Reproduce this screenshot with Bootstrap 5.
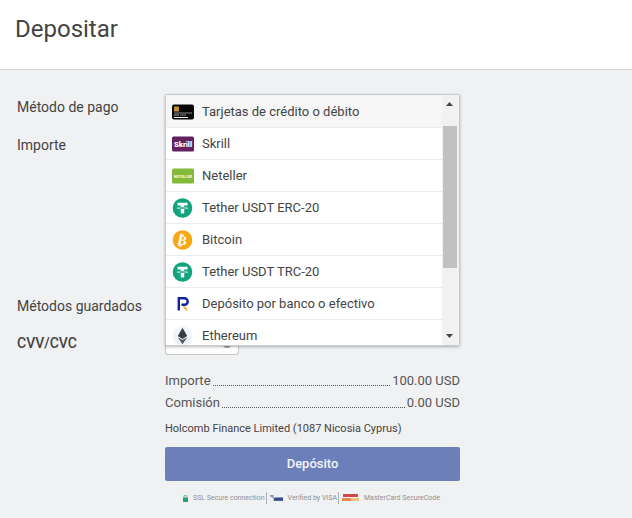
<!DOCTYPE html>
<html lang="es">
<head>
<meta charset="utf-8">
<title>Depositar</title>
<link href="https://cdn.jsdelivr.net/npm/bootstrap@5.3.0/dist/css/bootstrap.min.css" rel="stylesheet">
<style>
html,body{height:100%}
body{background:#f0f1f3;font-family:Roboto,"Liberation Sans",sans-serif;color:#444;font-size:14px;overflow:hidden}
.dep-head{height:70px;background:#fff;border-bottom:1px solid #d2d3d5;padding:15px 16px 0 15px}
.dep-title{font-size:24px;font-weight:400;line-height:28px;color:#444;margin:0}
.dep-form{width:460px}
.dep-labels{width:165px;flex:none}
.dep-lab{line-height:18px;font-size:14px;color:#444;position:absolute;left:17px;margin:0}
.dep-lab-1{top:98px}
.dep-lab-2{top:136px}
.dep-lab-3{top:297px}
.dep-lab-4{top:334px;font-size:14px;font-weight:500}
.dep-main{width:295px;flex:none}
.dep-stage{height:286px;padding-top:275px}
.dep-cvv{width:74px;height:10px;border:1px solid #c6c7c9;border-top:0;border-radius:0 0 4px 4px;background:#fff;padding-right:6px}
.dep-drop{position:absolute;left:165px;top:94px;width:295px;height:252px;background:#fff;border:1px solid #c9cacc;border-radius:2px;box-shadow:0 1px 3px rgba(0,0,0,.28);overflow:hidden;z-index:5}
.dep-list{flex:1 1 auto;min-width:0;overflow:hidden;padding-top:1px}
.dep-item{height:32px;flex:none;border-bottom:1px solid #ebebeb;padding-left:6px;gap:8px;font-size:13px;color:#444;background:#fff}
.dep-item.dep-sel{background:#f6f6f6;box-shadow:0 -1px 0 #f6f6f6}
.dep-ico{width:22px;height:20px;flex:none;display:block}
.dep-bar{width:17px;flex:none;background:#f1f1f1;position:relative}
.dep-thumb{position:absolute;left:1px;width:14px;top:31px;height:142px;background:#c1c1c1}
.dep-arrow{position:absolute;left:4px;width:7px;height:4px}
.dep-arrow-up{top:7px}
.dep-arrow-down{bottom:7px}
.dep-sum{line-height:18px;font-size:13px;color:#555;margin-top:16px}
.dep-sum+.dep-sum{margin-top:4px}
.dep-dots{flex:1 1 auto;border-bottom:1px dotted #555;margin:0 2px 4px;height:1px;align-self:flex-end}
.dep-comp{font-size:11px;line-height:16px;color:#444;margin-top:9px}
.dep-btn{display:block;width:295px;height:34px;margin-top:10px;background:#6c7fbb;border:0;border-radius:2px;color:#f3f4f8;font-size:13px;font-weight:500;padding:0}
.dep-secure{margin-top:11px;font-size:7px;line-height:10px;color:#8e9095;height:12px;padding-left:18px}
.dep-sep{width:1px;height:12px;background:#b0b1b3;margin:0 3px 0 1px}
.dep-sico{margin-right:5px;flex:none}
</style>
</head>
<body>
<header class="dep-head"><h1 class="dep-title">Depositar</h1></header>
<main class="dep-form d-flex">
  <div class="dep-labels">
    <p class="dep-lab dep-lab-1">Método de pago</p>
    <p class="dep-lab dep-lab-2">Importe</p>
    <p class="dep-lab dep-lab-3">Métodos guardados</p>
    <p class="dep-lab dep-lab-4">CVV/CVC</p>
  </div>
  <div class="dep-main">
    <div class="dep-stage"><div class="dep-cvv d-flex justify-content-end"><svg width="10" height="3" viewBox="0 0 10 3"><path d="M0 0h10L7 3H3z" fill="#aaa"/></svg></div></div>
    <div class="dep-sum d-flex justify-content-between"><span>Importe</span><span class="dep-dots"></span><span>100.00 USD</span></div>
    <div class="dep-sum d-flex justify-content-between"><span>Comisión</span><span class="dep-dots"></span><span>0.00 USD</span></div>
    <div class="dep-comp">Holcomb Finance Limited (1087 Nicosia Cyprus)</div>
    <button class="dep-btn" type="button">Depósito</button>
    <div class="dep-secure d-flex align-items-center">
      <svg class="dep-sico" width="5" height="7" viewBox="0 0 5 7"><rect y="2.500" width="5" height="4.500" fill="#2e9e6b"/><path d="M1 2.500V1.500a1.500 1.500 0 0 1 3 0V2.500" fill="none" stroke="#2e9e6b" stroke-width=".8"/></svg>
      <span>SSL Secure connection</span><span class="dep-sep"></span>
      <svg class="dep-sico" width="13" height="7" viewBox="0 0 14 7"><rect y="0" width="4" height="1.500" fill="#6a7db0"/><rect x="2" y="1.500" width="2" height="1.500" fill="#8b9bc4"/><rect x="5" y="2" width="9" height="1" fill="#7d8fbc"/><rect x="4" y="3" width="10" height="3" fill="#33497f"/></svg>
      <span>Verified by VISA</span><span class="dep-sep"></span>
      <svg class="dep-sico" width="17" height="8" viewBox="0 0 17 8"><rect x="1" y="0" width="15" height="3" fill="#d0474a"/><rect x="0" y="4" width="9" height="3" fill="#e38b4e"/><rect x="9" y="4" width="8" height="3" fill="#eec27a"/></svg>
      <span>MasterCard SecureCode</span>
    </div>
  </div>
</main>
<div class="dep-drop d-flex">
  <div class="dep-list d-flex flex-column">
    <div class="dep-item dep-sel d-flex align-items-center"><svg class="dep-ico" viewBox="0 0 22 20"><rect y="2.500" width="22" height="15" rx="2" fill="#060606"/><rect x="2" y="4.500" width="5" height="5" fill="#c08f2e"/><rect x="2" y="10.500" width="18" height="1" fill="#8a8a8a"/><rect x="2" y="12.500" width="5" height="1" fill="#c9a9a0"/><rect x="8" y="12.500" width="6" height="1" fill="#8a8a8a"/><rect x="2" y="15" width="14" height="1" fill="#f4f4f4"/></svg>Tarjetas de crédito o débito</div>
    <div class="dep-item d-flex align-items-center"><svg class="dep-ico" viewBox="0 0 22 20"><rect y="2.500" width="22" height="15" rx="1.500" fill="#64215f"/><text x="11" y="12.700" text-anchor="middle" font-size="7.500" font-weight="900" fill="#fff" font-family="Roboto" textLength="18" lengthAdjust="spacingAndGlyphs">Skrill</text></svg>Skrill</div>
    <div class="dep-item d-flex align-items-center"><svg class="dep-ico" viewBox="0 0 22 20"><rect y="2.500" width="22" height="15" rx="1.500" fill="#83ba3b"/><text x="11" y="11.500" text-anchor="middle" font-size="4" font-weight="900" fill="#f4f9ea" font-family="Roboto" textLength="18" lengthAdjust="spacingAndGlyphs">NETELLER</text></svg>Neteller</div>
    <div class="dep-item d-flex align-items-center"><svg class="dep-ico" viewBox="0 0 22 20"><circle cx="10.500" cy="10" r="9.800" fill="#12a37f"/><path d="M5.500 4.800h10v2.600h-3.300v1.500c2.200.1 4 .6 4 1.200s-1.800 1.100-4 1.200v4.200H8.800v-4.200c-2.200-.1-4-.6-4-1.200s1.800-1.100 4-1.200V7.400H5.500z" fill="#fff"/><ellipse cx="10.500" cy="10" rx="4.500" ry=".7" fill="#12a37f"/></svg>Tether USDT ERC-20</div>
    <div class="dep-item d-flex align-items-center"><svg class="dep-ico" viewBox="0 0 22 20"><circle cx="10.500" cy="10" r="9.800" fill="#f7a70f"/><text x="10.500" y="14.800" text-anchor="middle" font-size="13.500" font-weight="700" fill="#fff" font-family="DejaVu Sans" transform="rotate(12 10.500 10)">₿</text></svg>Bitcoin</div>
    <div class="dep-item d-flex align-items-center"><svg class="dep-ico" viewBox="0 0 22 20"><circle cx="10.500" cy="10" r="9.800" fill="#12a37f"/><path d="M5.500 4.800h10v2.600h-3.300v1.500c2.200.1 4 .6 4 1.200s-1.800 1.100-4 1.200v4.200H8.800v-4.200c-2.200-.1-4-.6-4-1.200s1.800-1.100 4-1.200V7.400H5.500z" fill="#fff"/><ellipse cx="10.500" cy="10" rx="4.500" ry=".7" fill="#12a37f"/></svg>Tether USDT TRC-20</div>
    <div class="dep-item d-flex align-items-center"><svg class="dep-ico" viewBox="0 0 22 20"><path d="M6.800 16.500V4.300h5.700a3.100 3.100 0 0 1 0 6.500H9.500" fill="none" stroke="#12229e" stroke-width="2.400"/><path d="M10.500 12.200l3.300 4.300h2.400l-3.300-4.500z" fill="#f5b93a"/></svg>Depósito por banco o efectivo</div>
    <div class="dep-item d-flex align-items-center"><svg class="dep-ico" viewBox="0 0 22 20"><circle cx="10.500" cy="10" r="9.800" fill="#eef6fc"/><path d="M10.500 1.800l4.700 8.200-4.700 2.900-4.700-2.900z" fill="#3d3d3d"/><path d="M5.800 11.200l4.700 2.900 4.700-2.900-4.700 7z" fill="#555"/></svg>Ethereum</div>
  </div>
  <div class="dep-bar">
    <svg class="dep-arrow dep-arrow-up" viewBox="0 0 7 4"><path d="M3.500 0L7 4H0z" fill="#444"/></svg>
    <div class="dep-thumb"></div>
    <svg class="dep-arrow dep-arrow-down" viewBox="0 0 7 4"><path d="M0 0h7L3.500 4z" fill="#444"/></svg>
  </div>
</div>
<script src="https://cdn.jsdelivr.net/npm/bootstrap@5.3.0/dist/js/bootstrap.bundle.min.js"></script>
</body>
</html>
